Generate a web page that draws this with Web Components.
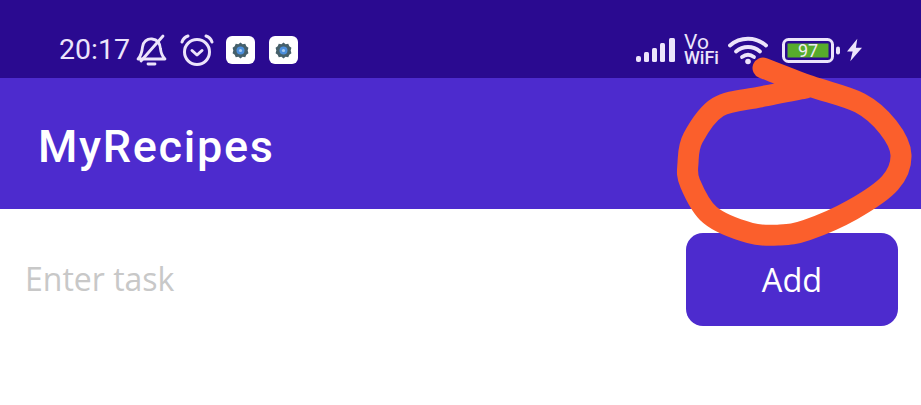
<!DOCTYPE html>
<html>
<head>
<meta charset="utf-8">
<style>
    html, body { margin: 0; padding: 0; background: #fff; }
    body { width: 921px; height: 405px; overflow: hidden; position: relative; font-family: Roboto, sans-serif; }
</style>
</head>
<body>
<status-bar></status-bar>
<app-bar>MyRecipes</app-bar>
<task-row></task-row>
<scribble-mark></scribble-mark>

<script>
const GEAR_ICON = `
    <svg width="19" height="19" viewBox="0 0 18 18">
        <path d="M9 1.5l2 1.6 2.5-.5 1 2.4 2 1.5-.7 2.5.7 2.5-2 1.5-1 2.4-2.500-.5-2 1.600-2-1.600-2.500.5-1-2.400-2-1.500.7-2.500-.7-2.500 2-1.500 1-2.400 2.500.5z" fill="#46606a"/>
        <circle cx="9" cy="9" r="3.8" fill="#4c8fdc"/>
        <circle cx="9" cy="9" r="1.5" fill="#a9ccf0"/>
    </svg>`;

class StatusBar extends HTMLElement {
    connectedCallback() {
        const shadow = this.attachShadow({ mode: "open" });
        shadow.innerHTML = `
            <style>
                :host {
                    display: flex;
                    align-items: center;
                    justify-content: space-between;
                    box-sizing: border-box;
                    height: 78px;
                    padding: 22px 59px 0 59px;
                    background: #2a0a90;
                    color: #ece4fb;
                    font-family: Roboto, sans-serif;
                }
                .time { font-size: 28.5px; line-height: 30px; font-weight: 400; }
                .left, .right { display: flex; align-items: center; }
                svg { display: block; }
                .bell { margin-left: 6px; }
                .alarm { margin-left: 12px; }
                .app {
                    display: flex;
                    align-items: center;
                    justify-content: center;
                    width: 29px;
                    height: 28px;
                    border-radius: 6px;
                    background: #fff;
                }
                .app.first { margin-left: 12px; }
                .app.second { margin-left: 14px; }
                .vowifi {
                    display: block;
                    width: 35px;
                    margin-left: 8px;
                    font-size: 18px;
                    line-height: 16px;
                    font-weight: 500;
                    white-space: pre;
                }
                .vowifi::first-line { font-size: 21px; font-weight: 400; }
                .wifi { margin-left: 9px; }
                .battery { margin-left: 14px; }
                .bolt { margin-left: 7px; }
            </style>
            <div class="left">
                <span class="time">20:17</span>
                <svg class="bell" width="32" height="32" viewBox="0 0 32 32" fill="none" stroke="#ece4fb" stroke-width="2.8" stroke-linecap="round" stroke-linejoin="round">
                    <path d="M2 25h27c-3-3-4-6-4.500-10C24 9 21 5.500 16 5S7 8 6.500 13C6 18 5 22 2 25z"/>
                    <path d="M5 27L27 2"/>
                    <path d="M12 30h7"/>
                </svg>
                <svg class="alarm" width="34" height="32" viewBox="0 0 34 32" fill="none" stroke="#ece4fb" stroke-width="3" stroke-linecap="round" stroke-linejoin="round">
                    <circle cx="17" cy="18" r="12.500"/>
                    <path d="M2 8C3 5 5 3 8 2"/>
                    <path d="M32 8c-1-3-3-5-6-6"/>
                    <path d="M12 16.500l5 4.500 5-4.500"/>
                </svg>
                <span class="app first">${GEAR_ICON}</span>
                <span class="app second">${GEAR_ICON}</span>
            </div>
            <div class="right">
                <svg width="40" height="26" viewBox="0 0 40 26" fill="#ece4fb">
                    <rect x="0" y="19" width="5" height="6" rx="2"/>
                    <rect x="8" y="15" width="5" height="10" rx="1.500"/>
                    <rect x="16" y="11" width="5" height="14" rx="1.500"/>
                    <rect x="24" y="6" width="5" height="19" rx="1.500"/>
                    <rect x="33" y="1" width="6" height="24" rx="1.500"/>
                </svg>
                <div class="vowifi">Vo
WiFi</div>
                <svg class="wifi" width="40" height="29" viewBox="0 0 40 29" fill="none" stroke="#ece4fb" stroke-width="3.800" stroke-linecap="round">
                    <path d="M2 9.500C12 .5 28 .5 38 9.500"/>
                    <path d="M8 15.500c7-6 17-6 24 0"/>
                    <path d="M14 21c4-3 8-3 12 0"/>
                    <circle cx="20" cy="25.500" r="2.800" fill="#ece4fb" stroke="none"/>
                </svg>
                <svg class="battery" width="58" height="25" viewBox="0 0 58 25">
                    <rect x="1.500" y="1.500" width="49" height="22" rx="5" fill="none" stroke="#ece4fb" stroke-width="3"/>
                    <rect x="5.500" y="5.500" width="41" height="14" fill="#57ab2c"/>
                    <rect x="54" y="8.500" width="4" height="8" rx="2" fill="#ece4fb"/>
                    <text x="26" y="18.500" text-anchor="middle" font-family="Roboto, sans-serif" font-size="18" font-weight="400" fill="#f0ecf6">97</text>
                </svg>
                <svg class="bolt" width="15" height="24" viewBox="0 0 16 24" fill="#ece4fb">
                    <path d="M11 0L0 13.500h6L3.500 24 16 9.500H9.500z"/>
                </svg>
            </div>
        `;
    }
}

class AppBar extends HTMLElement {
    connectedCallback() {
        const shadow = this.attachShadow({ mode: "open" });
        shadow.innerHTML = `
            <style>
                :host {
                    display: flex;
                    align-items: center;
                    box-sizing: border-box;
                    height: 131px;
                    padding: 6px 0 0 38px;
                    background: #4d2bce;
                    color: #fff;
                    font-family: Roboto, sans-serif;
                    font-size: 45px;
                    font-weight: 500;
                    letter-spacing: 1.7px;
                }
            </style>
            <slot></slot>
        `;
    }
}

class TaskRow extends HTMLElement {
    connectedCallback() {
        const shadow = this.attachShadow({ mode: "open" });
        shadow.innerHTML = `
            <style>
                :host {
                    display: flex;
                    align-items: center;
                    justify-content: space-between;
                    padding: 24px 23px 0 25px;
                    font-family: "Open Sans", sans-serif;
                    font-size: 32px;
                }
                .hint { color: #c8c8c8; margin-top: -3px; }
                .add {
                    display: flex;
                    align-items: center;
                    justify-content: center;
                    width: 212px;
                    height: 93px;
                    border-radius: 17px;
                    background: #4d2bce;
                    color: #fff;
                    font-size: 32.5px;
                }
            </style>
            <span class="hint">Enter task</span>
            <div class="add">Add</div>
        `;
    }
}

// points of the hand drawn circle, read off the screenshot
const SCRIBBLE_POINTS = [
    [763, 68], [810, 86], [860, 103], [888, 127], [901, 155], [890, 183], [852, 210],
    [807, 230], [780, 235], [750, 233], [710, 215], [690, 183], [688, 163], [693, 138],
    [718, 107], [760, 97], [806, 88]
];

function smoothPath(points) {
    let d = `M${points[0][0]} ${points[0][1]}`;
    for (let i = 0; i < points.length - 1; i++) {
        const p0 = points[Math.max(i - 1, 0)];
        const p1 = points[i];
        const p2 = points[i + 1];
        const p3 = points[Math.min(i + 2, points.length - 1)];
        const c1x = p1[0] + (p2[0] - p0[0]) / 6;
        const c1y = p1[1] + (p2[1] - p0[1]) / 6;
        const c2x = p2[0] - (p3[0] - p1[0]) / 6;
        const c2y = p2[1] - (p3[1] - p1[1]) / 6;
        d += `C${c1x} ${c1y} ${c2x} ${c2y} ${p2[0]} ${p2[1]}`;
    }
    return d;
}

// the scribble sits on top of everything else
class ScribbleMark extends HTMLElement {
    connectedCallback() {
        const shadow = this.attachShadow({ mode: "open" });
        shadow.innerHTML = `
            <style>
                :host { position: absolute; inset: 0; display: block; pointer-events: none; }
            </style>
            <svg width="921" height="405" viewBox="0 0 921 405" fill="none" stroke="#fb5f2c" stroke-width="21" stroke-linecap="round" stroke-linejoin="round">
                <path d="${smoothPath(SCRIBBLE_POINTS)}"/>
            </svg>
        `;
    }
}

customElements.define("status-bar", StatusBar);
customElements.define("app-bar", AppBar);
customElements.define("task-row", TaskRow);
customElements.define("scribble-mark", ScribbleMark);
</script>
</body>
</html>
